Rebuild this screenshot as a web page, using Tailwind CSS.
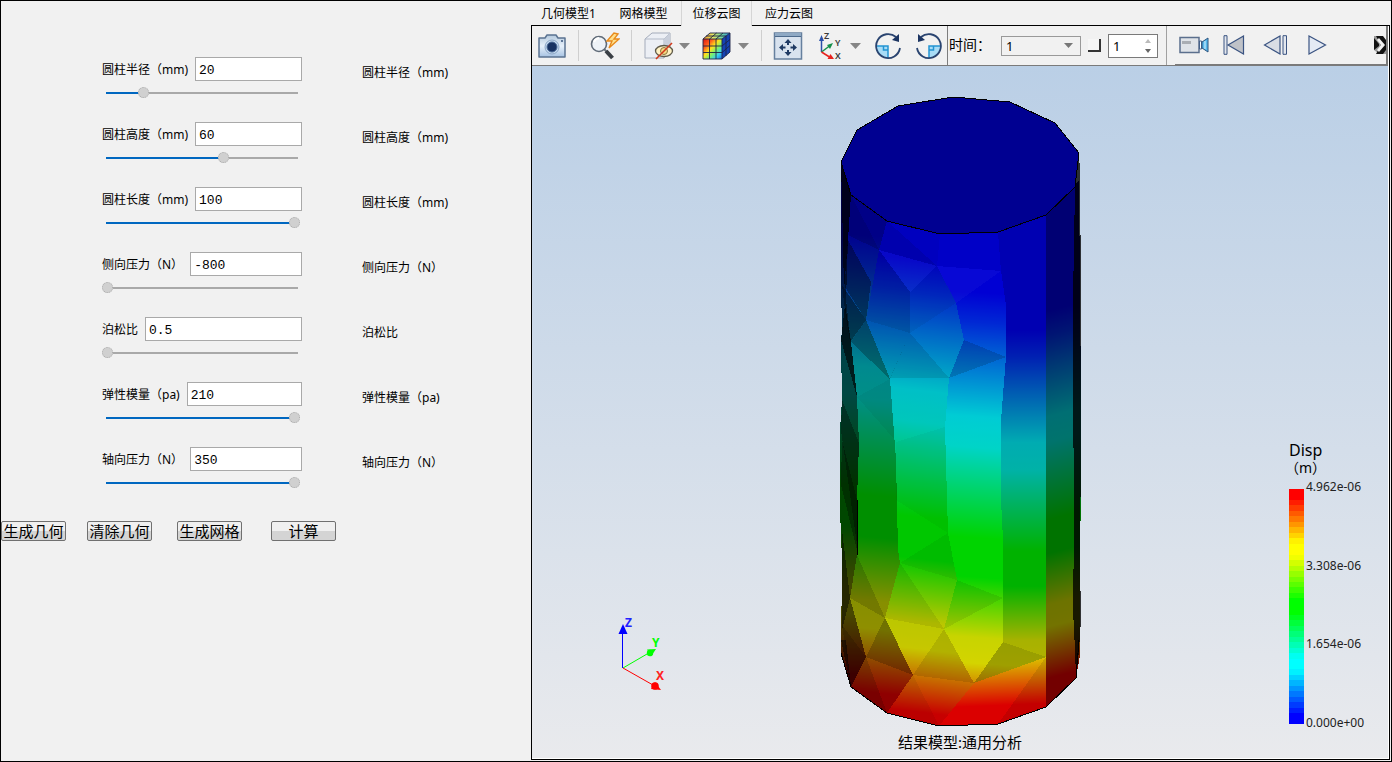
<!DOCTYPE html>
<html lang="zh-CN">
<head>
<meta charset="utf-8">
<title>圆柱仿真</title>
<script src="https://cdn.jsdelivr.net/npm/@tailwindcss/browser@4"></script>
</head>
<body class="bg-[#f1f1f1] text-black text-xs font-['Noto_Sans','Noto_Sans_CJK_SC',sans-serif]">
<div class="flex min-h-screen border border-black">

  <!-- parameter form -->
  <form class="w-[530px] shrink-0 pt-14">
    <div class="flex flex-col pl-[101px]">
      <div class="flex h-[65px]">
        <div class="w-[200px]">
          <div class="flex items-center gap-[7px]"><label for="p1" class="pt-px">圆柱半径（mm)</label><input id="p1" value="20" class="h-6 min-w-0 flex-1 border border-[#a9a9a9] bg-white px-[3px] pt-[2px] font-['Liberation_Mono',monospace] text-[13px]"></div>
          <input type="range" aria-label="圆柱半径" value="19" style="background-image:linear-gradient(to right,#0067c0 19%,#a9a9a9 19%)" class="mt-[6px] block h-[11px] w-[198px] appearance-none bg-[length:calc(100%-6px)_2px] bg-[position:4px_50%] bg-no-repeat [&::-webkit-slider-thumb]:size-[11px] [&::-webkit-slider-thumb]:appearance-none [&::-webkit-slider-thumb]:rounded-full [&::-webkit-slider-thumb]:border [&::-webkit-slider-thumb]:border-dotted [&::-webkit-slider-thumb]:border-[#aaa] [&::-webkit-slider-thumb]:bg-[#d0d0d0]">
        </div>
        <span class="ml-[60px] pt-2">圆柱半径（mm)</span>
      </div>
      <div class="flex h-[65px]">
        <div class="w-[200px]">
          <div class="flex items-center gap-[7px]"><label for="p2" class="pt-px">圆柱高度（mm)</label><input id="p2" value="60" class="h-6 min-w-0 flex-1 border border-[#a9a9a9] bg-white px-[3px] pt-[2px] font-['Liberation_Mono',monospace] text-[13px]"></div>
          <input type="range" aria-label="圆柱高度" value="62" style="background-image:linear-gradient(to right,#0067c0 62%,#a9a9a9 62%)" class="mt-[6px] block h-[11px] w-[198px] appearance-none bg-[length:calc(100%-6px)_2px] bg-[position:4px_50%] bg-no-repeat [&::-webkit-slider-thumb]:size-[11px] [&::-webkit-slider-thumb]:appearance-none [&::-webkit-slider-thumb]:rounded-full [&::-webkit-slider-thumb]:border [&::-webkit-slider-thumb]:border-dotted [&::-webkit-slider-thumb]:border-[#aaa] [&::-webkit-slider-thumb]:bg-[#d0d0d0]">
        </div>
        <span class="ml-[60px] pt-2">圆柱高度（mm)</span>
      </div>
      <div class="flex h-[65px]">
        <div class="w-[200px]">
          <div class="flex items-center gap-[7px]"><label for="p3" class="pt-px">圆柱长度（mm)</label><input id="p3" value="100" class="h-6 min-w-0 flex-1 border border-[#a9a9a9] bg-white px-[3px] pt-[2px] font-['Liberation_Mono',monospace] text-[13px]"></div>
          <input type="range" aria-label="圆柱长度" value="100" style="background-image:linear-gradient(to right,#0067c0 98%,#a9a9a9 98%)" class="mt-[6px] block h-[11px] w-[198px] appearance-none bg-[length:calc(100%-6px)_2px] bg-[position:4px_50%] bg-no-repeat [&::-webkit-slider-thumb]:size-[11px] [&::-webkit-slider-thumb]:appearance-none [&::-webkit-slider-thumb]:rounded-full [&::-webkit-slider-thumb]:border [&::-webkit-slider-thumb]:border-dotted [&::-webkit-slider-thumb]:border-[#aaa] [&::-webkit-slider-thumb]:bg-[#d0d0d0]">
        </div>
        <span class="ml-[60px] pt-2">圆柱长度（mm)</span>
      </div>
      <div class="flex h-[65px]">
        <div class="w-[200px]">
          <div class="flex items-center gap-[7px]"><label for="p4" class="pt-px">侧向压力（N）</label><input id="p4" value="-800" class="h-6 min-w-0 flex-1 border border-[#a9a9a9] bg-white px-[3px] pt-[2px] font-['Liberation_Mono',monospace] text-[13px]"></div>
          <input type="range" aria-label="侧向压力" value="0" style="background-image:linear-gradient(to right,#a9a9a9,#a9a9a9)" class="mt-[6px] block h-[11px] w-[198px] appearance-none bg-[length:calc(100%-6px)_2px] bg-[position:4px_50%] bg-no-repeat [&::-webkit-slider-thumb]:size-[11px] [&::-webkit-slider-thumb]:appearance-none [&::-webkit-slider-thumb]:rounded-full [&::-webkit-slider-thumb]:border [&::-webkit-slider-thumb]:border-dotted [&::-webkit-slider-thumb]:border-[#aaa] [&::-webkit-slider-thumb]:bg-[#d0d0d0]">
        </div>
        <span class="ml-[60px] pt-2">侧向压力（N）</span>
      </div>
      <div class="flex h-[65px]">
        <div class="w-[200px]">
          <div class="flex items-center gap-[7px]"><label for="p5" class="pt-px">泊松比</label><input id="p5" value="0.5" class="h-6 min-w-0 flex-1 border border-[#a9a9a9] bg-white px-[3px] pt-[2px] font-['Liberation_Mono',monospace] text-[13px]"></div>
          <input type="range" aria-label="泊松比" value="0" style="background-image:linear-gradient(to right,#a9a9a9,#a9a9a9)" class="mt-[6px] block h-[11px] w-[198px] appearance-none bg-[length:calc(100%-6px)_2px] bg-[position:4px_50%] bg-no-repeat [&::-webkit-slider-thumb]:size-[11px] [&::-webkit-slider-thumb]:appearance-none [&::-webkit-slider-thumb]:rounded-full [&::-webkit-slider-thumb]:border [&::-webkit-slider-thumb]:border-dotted [&::-webkit-slider-thumb]:border-[#aaa] [&::-webkit-slider-thumb]:bg-[#d0d0d0]">
        </div>
        <span class="ml-[60px] pt-2">泊松比</span>
      </div>
      <div class="flex h-[65px]">
        <div class="w-[200px]">
          <div class="flex items-center gap-[7px]"><label for="p6" class="pt-px">弹性模量（pa)</label><input id="p6" value="210" class="h-6 min-w-0 flex-1 border border-[#a9a9a9] bg-white px-[3px] pt-[2px] font-['Liberation_Mono',monospace] text-[13px]"></div>
          <input type="range" aria-label="弹性模量" value="100" style="background-image:linear-gradient(to right,#0067c0 98%,#a9a9a9 98%)" class="mt-[6px] block h-[11px] w-[198px] appearance-none bg-[length:calc(100%-6px)_2px] bg-[position:4px_50%] bg-no-repeat [&::-webkit-slider-thumb]:size-[11px] [&::-webkit-slider-thumb]:appearance-none [&::-webkit-slider-thumb]:rounded-full [&::-webkit-slider-thumb]:border [&::-webkit-slider-thumb]:border-dotted [&::-webkit-slider-thumb]:border-[#aaa] [&::-webkit-slider-thumb]:bg-[#d0d0d0]">
        </div>
        <span class="ml-[60px] pt-2">弹性模量（pa)</span>
      </div>
      <div class="flex h-[65px]">
        <div class="w-[200px]">
          <div class="flex items-center gap-[7px]"><label for="p7" class="pt-px">轴向压力（N）</label><input id="p7" value="350" class="h-6 min-w-0 flex-1 border border-[#a9a9a9] bg-white px-[3px] pt-[2px] font-['Liberation_Mono',monospace] text-[13px]"></div>
          <input type="range" aria-label="轴向压力" value="100" style="background-image:linear-gradient(to right,#0067c0 98%,#a9a9a9 98%)" class="mt-[6px] block h-[11px] w-[198px] appearance-none bg-[length:calc(100%-6px)_2px] bg-[position:4px_50%] bg-no-repeat [&::-webkit-slider-thumb]:size-[11px] [&::-webkit-slider-thumb]:appearance-none [&::-webkit-slider-thumb]:rounded-full [&::-webkit-slider-thumb]:border [&::-webkit-slider-thumb]:border-dotted [&::-webkit-slider-thumb]:border-[#aaa] [&::-webkit-slider-thumb]:bg-[#d0d0d0]">
        </div>
        <span class="ml-[60px] pt-2">轴向压力（N）</span>
      </div>
    </div>
    <div class="mt-[9px] flex text-[15px] leading-[18px]">
      <button type="button" class="h-5 w-[65px] whitespace-nowrap rounded-[2px] border border-[#707070] bg-linear-to-b from-[#f0f0f0] from-50% to-[#d4d4d4] to-50%"><span class="flex justify-center">生成几何</span></button>
      <button type="button" class="ml-[21px] h-5 w-[65px] whitespace-nowrap rounded-[2px] border border-[#707070] bg-linear-to-b from-[#f0f0f0] from-50% to-[#d4d4d4] to-50%"><span class="flex justify-center">清除几何</span></button>
      <button type="button" class="ml-[25px] h-5 w-[65px] whitespace-nowrap rounded-[2px] border border-[#707070] bg-linear-to-b from-[#f0f0f0] from-50% to-[#d4d4d4] to-50%"><span class="flex justify-center">生成网格</span></button>
      <button type="button" class="ml-[29px] h-5 w-[65px] whitespace-nowrap rounded-[2px] border border-[#707070] bg-linear-to-b from-[#f0f0f0] from-50% to-[#d4d4d4] to-50%"><span class="flex justify-center">计算</span></button>
    </div>
  </form>

  <!-- result viewer -->
  <main class="flex min-w-0 flex-1 flex-col pr-px pb-px">
    <div role="tablist" class="flex h-[25px] items-stretch leading-[26px]">
      <button role="tab" class="w-[75px] border-b border-black">几何模型1</button>
      <button role="tab" class="w-[75px] border-b border-black">网格模型</button>
      <button role="tab" aria-selected="true" class="w-[71px] border-x border-[#d5d5d5]">位移云图</button>
      <button role="tab" class="w-[74px] border-b border-black">应力云图</button>
      <span class="flex-1 border-b border-black"></span>
    </div>

    <section class="flex flex-1 flex-col border-x border-b border-black bg-white pr-px pb-px">
      <div class="flex h-10 items-center border-b border-[#7a7a7a] bg-[#f1f1f1]">
        <button aria-label="截图" class="ml-[6px]"><svg class="block" width="28" height="28" viewBox="0 0 28 28"><defs><linearGradient id="cam" x1="0" y1="0" x2="0" y2="1"><stop offset="0" stop-color="#b5c9dd"/><stop offset=".5" stop-color="#e6f0fa"/><stop offset="1" stop-color="#a6c2e2"/></linearGradient></defs><path d="M1 6h6l2-3h9l2 3h7v19H1z" fill="url(#cam)" stroke="#5b7391" stroke-width="1.5" stroke-linejoin="round"/><circle cx="14" cy="15" r="7" fill="#c5d9ef" stroke="#8ba6c6"/><circle cx="14" cy="15" r="5" fill="#183262" stroke="#4b6a96"/><circle cx="24" cy="9" r="1" fill="#39557c"/></svg></button>
        <span class="ml-3 h-[31px] w-px bg-[#cfcfcf]"></span>
        <button aria-label="快速缩放" class="ml-[11px]"><svg class="block" width="30" height="30" viewBox="0 0 30 30"><path d="M14 18l3 3" stroke="#6b747e" stroke-width="2"/><path d="M16 20l6.500 7" stroke="#3a3f45" stroke-width="4"/><circle cx="9" cy="13" r="7.500" fill="#eef3f8" stroke="#606b78" stroke-width="1.600"/><path d="M4 11a6 6 0 0 1 5-4" stroke="#fff" stroke-width="2" fill="none"/><path d="M24 2l-7 8h5l-3 7 10-9h-5l4-5z" fill="#ffdf8a" stroke="#e88a1c" stroke-width="1.400"/></svg></button>
        <span class="ml-[11px] h-[31px] w-px bg-[#cfcfcf]"></span>
        <button aria-label="隐藏" class="ml-3"><svg class="block" width="30" height="30" viewBox="0 0 30 30"><path d="M1 8l7-6h18v18l-6 7H1z" fill="#eceff5" stroke="#a3abba"/><path d="M1 8h19l6-6M20 8v19" fill="none" stroke="#b3bac8"/><path d="M20 8l6-6v18l-6 7z" fill="#c9cfdb"/><ellipse cx="20" cy="20" rx="8.500" ry="5.500" fill="#fff2c4" stroke="#5f5a4a" stroke-width="1.300"/><circle cx="20" cy="20" r="3.500" fill="#f4d780" stroke="#8a7440"/><path d="M12 28L28 12" stroke="#d1391c" stroke-width="1.600"/></svg></button>
        <svg class="ml-[5px]" width="11" height="6" viewBox="0 0 11 6"><path d="M0 0h11L5.500 6z" fill="#868686"/></svg>
        <button aria-label="云图显示" class="ml-3"><svg class="block" width="30" height="30" viewBox="0 0 30 30"><defs><linearGradient id="cf" x1="0" y1="0" x2="1" y2="1"><stop offset="0" stop-color="#d81414"/><stop offset=".25" stop-color="#ff5a1a"/><stop offset=".45" stop-color="#ffe41c"/><stop offset=".62" stop-color="#7df06a"/><stop offset=".8" stop-color="#35d2f0"/><stop offset="1" stop-color="#1a60e0"/></linearGradient><linearGradient id="ct" x1="0" y1="0" x2="1" y2="0"><stop offset="0" stop-color="#ee8a20"/><stop offset=".35" stop-color="#e8e860"/><stop offset=".7" stop-color="#6ed6a0"/><stop offset="1" stop-color="#2a8ce0"/></linearGradient></defs><path d="M1 8h19v20H1z" fill="url(#cf)"/><path d="M1 8l7-6h20l-8 6z" fill="url(#ct)"/><path d="M20 8l8-6v19l-8 7z" fill="#1542b4"/><path d="M1 8h19v20H1zM7.500 8v20M14 8v20M1 15h19M1 21.500h19M1 8l7-6h20l-8 6M28 2v19l-8 7M7.500 8l7-6M14 8l7-6M4 5h20M20 15l8-6.500M20 21.500l8-7M24 5v20" fill="none" stroke="#1d2447" stroke-width=".9"/></svg></button>
        <svg class="ml-[6px]" width="11" height="6" viewBox="0 0 11 6"><path d="M0 0h11L5.500 6z" fill="#868686"/></svg>
        <span class="ml-3 h-[31px] w-px bg-[#cfcfcf]"></span>
        <button aria-label="适应窗口" class="ml-[11px]"><svg class="block" width="30" height="30" viewBox="0 0 30 30"><path d="M1.500 2h27v26h-27z" fill="#d8e2ee" stroke="#66809e" stroke-width="1.500"/><path d="M2 2h26v3H2z" fill="#8fa9c4"/><path d="M2 5.500h26" stroke="#4d6a8c"/><path d="M15 8l3.500 4h-2.500v2h-2v-2h-2.500zM15 25l3.500-4h-2.500v-2h-2v2h-2.500zM6 16.500l4-3.500v2.500h2.500v2H10V20zM24 16.500l-4-3.500v2.500h-2.500v2H20V20z" fill="#1f3a63"/></svg></button>
        <button aria-label="视图方向" class="ml-[15px]"><svg class="block overflow-visible" width="28" height="30" viewBox="0 0 28 30"><path d="M3.500 21V9" stroke="#2a4fa8" stroke-width="1.500"/><path d="M3.500 4l2.500 6H1z" fill="#2a4fa8"/><path d="M3.500 21l8-6" stroke="#15904a" stroke-width="1.500"/><path d="M15 12l-3 6-3-4z" fill="#15904a"/><path d="M3.500 21l8 5" stroke="#e8231e" stroke-width="1.500"/><path d="M16 28h-6.500l3-5z" fill="#e8231e"/><g font-family="Noto Sans, sans-serif" font-size="9" font-weight="600" fill="#3a3a3a"><text x="6" y="8">Z</text><text x="17" y="15">Y</text><text x="17" y="28">X</text></g></svg></button>
        <svg class="ml-1" width="11" height="6" viewBox="0 0 11 6"><path d="M0 0h11L5.500 6z" fill="#868686"/></svg>
        <button aria-label="顺时针旋转" class="ml-[13px]"><svg class="block" width="28" height="28" viewBox="0 0 28 28"><path d="M2 14h12v12A12 12 0 0 1 2 14z" fill="#a8dcf6"/><path d="M2 14h12v12M9.500 14v4h4.500" fill="none" stroke="#2394d2" stroke-width="1.500"/><path d="M22 5A12 12 0 1 0 26 16" fill="none" stroke="#2a4470" stroke-width="1.800"/><path d="M25 2v8l-7-2z" fill="#1c3562"/></svg></button>
        <button aria-label="逆时针旋转" class="ml-[13px]"><svg class="block" width="28" height="28" viewBox="0 0 28 28"><path d="M26 14H14v12a12 12 0 0 0 12-12z" fill="#a8dcf6"/><path d="M26 14H14v12M18.500 14v4H14" fill="none" stroke="#2394d2" stroke-width="1.500"/><path d="M6 5A12 12 0 1 1 2 16" fill="none" stroke="#2a4470" stroke-width="1.800"/><path d="M3 2v8l7-2z" fill="#1c3562"/></svg></button>
        <span class="ml-1 h-full w-px bg-[#7d7d7d]"></span>
        <label for="time" class="ml-px w-[52px] whitespace-nowrap text-[14px]">时间：</label>
        <span class="relative">
          <select id="time" class="block h-5 w-20 appearance-none border border-[#999] bg-[#f1f1f1] px-1 text-[13px] leading-4"><option>1</option></select>
          <svg class="pointer-events-none absolute top-[7px] right-2" width="9" height="5" viewBox="0 0 9 5"><path d="M0 0h9L4.500 5z" fill="#777"/></svg>
        </span>
        <input type="checkbox" aria-label="循环" class="ml-[7px] size-[13px] appearance-none border-r-2 border-b-2 border-[#333] bg-[#f6f6f6]">
        <span class="relative ml-[7px]">
          <input aria-label="帧" value="1" class="block h-6 w-[50px] border border-[#7a7a7a] bg-white px-1 text-[13px]">
          <svg class="absolute top-[5px] right-[7px]" width="6" height="14" viewBox="0 0 6 14"><path d="M0 4h6L3 0z" fill="#bbb"/><path d="M0 10h6l-3 4z" fill="#666"/></svg>
        </span>
        <span class="ml-2 h-full w-px bg-[#a0a0a0]"></span>
        <div class="ml-2 flex h-full flex-1 items-center border-r-2 border-b border-[#7a7a7a]">
          <button aria-label="录制" class="ml-1"><svg class="block" width="30" height="18" viewBox="0 0 30 18"><path d="M1 1.500h19v15H1z" fill="#dfe3e8" stroke="#5b6f8d" stroke-width="1.500"/><path d="M3 5h9v3H3z" fill="#a9adb3"/><path d="M20.500 5h2v8h-2z" fill="#fff" stroke="#45618a"/><path d="M23 6l6-4v14l-6-4z" fill="#58b8ec" stroke="#2b5480"/><path d="M26 5v8" stroke="#d9f2ff"/></svg></button>
          <button aria-label="首帧" class="ml-[14px]"><svg class="block" width="22" height="20" viewBox="0 0 22 20"><path d="M1 .7h3v18.600H1z" fill="#e3e7ee" stroke="#3b5482"/><path d="M20.500 1v18L5 10z" fill="#bfc2c8" stroke="#3b5482" stroke-width="1.200"/></svg></button>
          <button aria-label="上一帧" class="ml-[18px]"><svg class="block" width="25" height="20" viewBox="0 0 25 20"><path d="M17 1v18L1.500 10z" fill="#d9dde5" stroke="#3b5482" stroke-width="1.200"/><path d="M20 .7h3.500v18.600H20z" fill="#e3e7ee" stroke="#3b5482"/></svg></button>
          <button aria-label="播放" class="ml-5"><svg class="block" width="19" height="20" viewBox="0 0 19 20"><path d="M1 1v18l16.500-9z" fill="#e4eaf4" stroke="#3b5482" stroke-width="1.200"/></svg></button>
          <button aria-label="更多" class="ml-auto"><svg class="block" width="12" height="18" viewBox="0 0 12 18"><path d="M0 0h5l7 6v12H5l-5-4z" fill="#999"/><path d="M2 0h7l3 4v10l-3 4H2l5-9z" fill="#111"/><path d="M0 2l5 6v2l-5 4V9h-0z" fill="#111"/><path d="M5 2l6 7-6 7-2-2 4-5-4-5z" fill="#f1f1f1"/></svg></button>
        </div>
      </div>

      <div class="relative flex flex-1 flex-col items-center justify-end bg-linear-to-b from-[#bacfe6] to-[#e9eaed] pb-[7px]">
        <svg width="250" height="640" viewBox="835 93 250 640" role="img" aria-label="圆柱位移云图" shape-rendering="crispEdges">
          <defs>
            <linearGradient id="s"><stop offset="0" stop-color="#00f"/><stop offset=".07" stop-color="#0030ff"/><stop offset=".157" stop-color="#0080ff"/><stop offset=".29" stop-color="#00f6ff"/><stop offset=".36" stop-color="#00fff0"/><stop offset=".57" stop-color="#0f0"/><stop offset=".66" stop-color="#0f0"/><stop offset=".8" stop-color="#f0ff00"/><stop offset=".86" stop-color="#ff0"/><stop offset=".93" stop-color="#ff8000"/><stop offset="1" stop-color="#f00"/></linearGradient>
            <linearGradient id="g0" href="#s" gradientUnits="userSpaceOnUse" x1="850" y1="235" x2="850" y2="675"/>
            <linearGradient id="g1" href="#s" gradientUnits="userSpaceOnUse" x1="880" y1="235" x2="840" y2="690"/>
            <linearGradient id="g2" href="#s" gradientUnits="userSpaceOnUse" x1="930" y1="260" x2="880" y2="708"/>
            <linearGradient id="g3" href="#s" gradientUnits="userSpaceOnUse" x1="980" y1="292" x2="950" y2="722"/>
            <linearGradient id="g4" href="#s" gradientUnits="userSpaceOnUse" x1="1025" y1="330" x2="1025" y2="718"/>
            <linearGradient id="g6" href="#s" gradientUnits="userSpaceOnUse" x1="1020" y1="330" x2="1035" y2="704"/>
            <linearGradient id="g5" href="#s" gradientUnits="userSpaceOnUse" x1="1010" y1="320" x2="1100" y2="665"/>
          </defs>
          <path d="M841 160L841 290 842 325 841 345 842 400 840 430 840 510 842 560 841 653 851 687 900 600 870 400 870 200z" fill="url(#g0)"/>
          <path d="M841 160L841 290 842 325 841 345 842 400 840 430 840 510 842 560 841 653 851 687 900 600 870 400 870 200z" fill="#000" opacity=".72"/>
          <path d="M851 195L848 240 846 300 851 342 857 397 859 443 857 500 857 555 850 598 866 657 851 687 887 713 913 675 930 600 900 400 900 220 887 221z" fill="url(#g1)"/>
          <path d="M851 195L848 240 846 300 851 342 857 397 859 443 857 500 857 555 850 598 866 657 851 687 887 713 913 675 930 600 900 400 900 220 887 221z" fill="#000" opacity=".44"/>
          <path d="M887 221L879 250 866 320 890 379 896 460 898 550 900 563 885 618 913 675 887 713 939 726 974 683 960 600 970 340 940 234z" fill="url(#g2)"/>
          <path d="M887 221L879 250 866 320 890 379 896 460 898 550 900 563 885 618 913 675 887 713 939 726 974 683 960 600 970 340 940 234z" fill="#000" opacity=".22"/>
          <path d="M940 234L937 266 956 303 964 340 949 378 945 427 948 533 957 580 944 629 974 683 939 726 998 724 1046 657 1003 642 1010 540 1010 300 998 232z" fill="url(#g3)"/>
          <path d="M940 234L937 266 956 303 964 340 949 378 945 427 948 533 957 580 944 629 974 683 939 726 998 724 1046 657 1003 642 1010 540 1010 300 998 232z" fill="#000" opacity=".17"/>
          <path d="M998 232L1001 271 1006 305 1006 357 1001 420 1001 500 1003 540 1003 642 1046 657V215z" fill="url(#g4)"/>
          <path d="M998 232L1001 271 1006 305 1006 357 1001 420 1001 500 1003 540 1003 642 1046 657V215z" fill="#000" opacity=".3"/>
          <path d="M1046 657L974 683 939 726 998 724 1046 707z" fill="url(#g6)"/>
          <path d="M1046 657L974 683 939 726 998 724 1046 707z" fill="#000" opacity=".14"/>
          <path d="M1046 657L998 724 1046 707z" fill="#000" opacity=".1"/>
          <path d="M1046 215L1079 180 1081 400 1080 655 1076 678 1046 707z" fill="url(#g5)"/>
          <path d="M1046 215L1079 180 1081 400 1080 655 1076 678 1046 707z" fill="#000" opacity=".55"/>
          <path d="M1079 153L1080 172V235L1081 236V495L1080 500V590L1081 592V620L1079 650 1076 678 1075 650 1073 610 1074 530 1074 455 1073 440V300L1075 187z" fill="#000" opacity=".78"/>
          <!-- facet shading -->
          <g fill="#000">
            <path d="M841 162L851 195 848 240 844 290 842 200z" opacity=".6"/>
            <path d="M842 285L866 320 850 342 845 310z" opacity=".3"/>
            <path d="M845 305L851 342 857 397 841 340z" opacity=".6"/>
            <path d="M842 400L859 443 857 500 857 545 841 430z" opacity=".3"/>
            <path d="M841 485L857 550V500L842 440z" opacity=".3"/>
            <path d="M842 530L850 598 842 630z" opacity=".45"/>
            <path d="M842 625L866 657 851 687z" opacity=".15"/>
            <path d="M841 640L851 687 846 640z" opacity=".5"/>
            <path d="M851 195L879 250 848 235z" opacity=".15"/>
            <path d="M848 240L871 282 866 320 846 262z" opacity=".35"/>
            <path d="M846 262L866 320 845 287z" opacity=".35"/>
            <path d="M851 195L887 221 879 250z" opacity=".05"/>
            <path d="M845 290L866 320 851 342z" opacity=".2"/>
            <path d="M866 320L890 379 851 342z" opacity=".25"/>
            <path d="M857 397L895 440 896 460 890 379z" opacity=".04"/>
            <path d="M857 555L885 618 850 598z" opacity=".15"/>
            <path d="M885 618L913 675 866 657z" opacity=".2"/>
            <path d="M866 657L887 713 851 687z" opacity=".15"/>
            <path d="M887 221L940 234 937 266z" opacity=".04"/>
            <path d="M887 221L937 266 879 250z" opacity=".12"/>
            <path d="M879 250L910 292V333L866 320z" opacity=".18"/>
            <path d="M937 266L956 303 910 333V292z" opacity=".05"/>
            <path d="M910 333L949 378H890z" opacity=".1"/>
            <path d="M866 320L910 333 890 379z" opacity=".1"/>
            <path d="M964 340L1006 357 949 378z" opacity=".15"/>
            <path d="M945 427L948 533 896 500V442z" opacity=".03"/>
            <path d="M948 533L957 580 900 563z" opacity=".05"/>
            <path d="M900 563L944 629 885 618z" opacity=".08"/>
            <path d="M957 580L1003 598 944 629z" opacity=".08"/>
            <path d="M944 629L974 683 913 675z" opacity=".1"/>
            <path d="M1003 642L1046 657 974 683z" opacity=".25"/>
            <path d="M913 675L939 726 887 713z" opacity=".06"/>
            <path d="M940 234L998 232 1001 271 937 266z" opacity=".06"/>
          </g>
          <g fill="#fff">
            <path d="M879 250L937 266 910 292z" opacity=".03"/>
            <path d="M937 266L1001 271 956 303z" opacity=".03"/>
          </g>
          <path d="M841 162L857 130 898 106 953 97 1010 102 1055 123 1079 153 1075 187 1046 215 998 232 940 234 887 221 851 195z" fill="#000091" stroke="#000"/>
          <path d="M841 653L851 687 887 713 939 726 998 724 1046 707 1076 678 1079 640M857 500V555" fill="none" stroke="#000"/>
        </svg>
        <p class="text-[15px] leading-[18px]">结果模型:通用分析</p>

        <!-- orientation triad -->
        <svg class="absolute bottom-[64px] left-[80px]" width="60" height="80" viewBox="612 614 60 80" aria-hidden="true"><path d="M622.500 668V634" stroke="#00f"/><path d="M623 624l4.500 10h-9z" fill="#00f"/><path d="M623 668l24-14" stroke="#0f0"/><path d="M656 649l-5 7.500-4-7z" fill="#0f0"/><circle cx="650" cy="653" r="3.200" fill="#0f0"/><path d="M623 668l30 17" stroke="#f00"/><path d="M661 690l-10-1 4-7z" fill="#f00"/><circle cx="655" cy="686" r="3.800" fill="#f00"/><g font-family="Noto Sans, sans-serif" font-size="12" font-weight="700"><text x="625" y="627" fill="#22f">Z</text><text x="652" y="647" fill="#0f0">Y</text><text x="656" y="680" fill="#f22">X</text></g></svg>

        <!-- colour legend -->
        <div class="absolute right-[19px] bottom-[28px] w-20">
          <div class="text-[16px] leading-[18px]">Disp</div>
          <div class="-ml-1 text-[14px] leading-[17px] whitespace-nowrap">（m）</div>
          <div class="mt-[5px] flex h-[249px] gap-[2px]">
            <div id="bands" class="mt-[8px] flex h-[235px] w-[15px] flex-col"></div>
            <div class="flex h-[248px] flex-1 flex-col justify-between leading-[12px] text-[#222]"><span>4.962e-06</span><span>3.308e-06</span><span>1.654e-06</span><span>0.000e+00</span></div>
          </div>
        </div>
      </div>
    </section>
  </main>
</div>
<script>
  // Hue ramp red > yellow > green > cyan > blue, held flat around each primary hue
  const bands = document.getElementById('bands');
  for (let i = 0; i < 43; i++) {
    const t = (i / 42) * 4;
    const k = Math.round(t);
    const d = t - k;
    const hue = 60 * (k + Math.sign(d) * Math.max(0, Math.abs(d) - 0.1) * 1.25);
    const b = document.createElement('div');
    b.className = 'flex-1';
    b.style.backgroundColor = `hsl(${hue} 100% 50%)`;
    bands.appendChild(b);
  }
</script>
</body>
</html>
